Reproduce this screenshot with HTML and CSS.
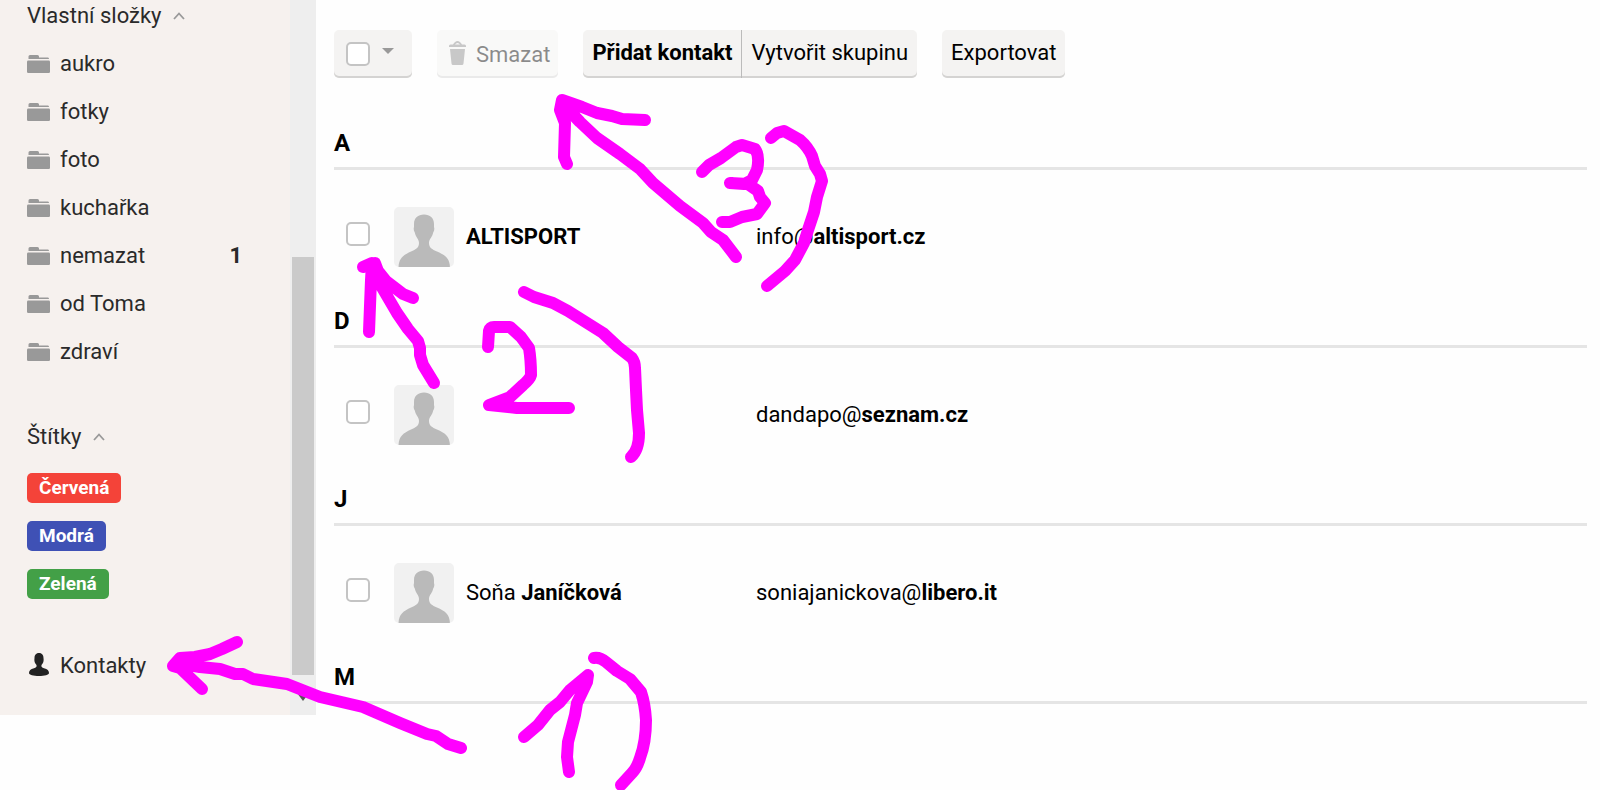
FILE: index.html
```
<!DOCTYPE html>
<html lang="cs">
<head>
  <meta charset="UTF-8" />
  <meta name="viewport" content="width=device-width, initial-scale=1.0" />
  <title>Kontakty</title>
  <link rel="stylesheet" href="styles.css">
</head>
<body>

  <svg class="symbols" aria-hidden="true">
    <symbol id="folder" viewBox="0 0 23 18">
      <path d="M1.500 3V1.500Q1.500 0 3 0h7.500Q12 0 12 1.500V2.500h9q1 0 1 1.500H1.500z" />
      <rect y="5.500" width="23" height="12.500" rx="1.200" />
    </symbol>
    <symbol id="chevron" viewBox="0 0 12 8">
      <path d="M1 7l5-5.500L11 7" fill="none" stroke="currentColor" stroke-width="1.800" />
    </symbol>
    <symbol id="avatar" viewBox="0 0 60 60">
      <path d="M20 17c0-6 4-9.500 10-9.500S40 11 40 17v3c.6 2 .3 4-.8 5.500C38.500 30 35 32 35 36c0 4.500 3 6.500 8 8.500C51 48 55.500 51 56 60H4.500c.5-9 5-12 12.500-15.500 5-2 8-4 8-8.500 0-4-3.500-6-4.200-10.500-1.100-1.500-1.400-3.500-.8-5.500z" />
    </symbol>
  </svg>

  <div class="layout">
    <aside class="sidebar">
      <nav class="menu">
        <button class="menu-title">Vlastní složky <svg class="chevron"><use href="#chevron" /></svg></button>
        <ul class="folders">
          <li><a href="#aukro"><svg class="folder"><use href="#folder" /></svg>aukro</a></li>
          <li><a href="#fotky"><svg class="folder"><use href="#folder" /></svg>fotky</a></li>
          <li><a href="#foto"><svg class="folder"><use href="#folder" /></svg>foto</a></li>
          <li><a href="#kucharka"><svg class="folder"><use href="#folder" /></svg>kuchařka</a></li>
          <li><a href="#nemazat"><svg class="folder"><use href="#folder" /></svg>nemazat<b class="count">1</b></a></li>
          <li><a href="#od-toma"><svg class="folder"><use href="#folder" /></svg>od Toma</a></li>
          <li><a href="#zdravi"><svg class="folder"><use href="#folder" /></svg>zdraví</a></li>
        </ul>

        <button class="menu-title">Štítky <svg class="chevron"><use href="#chevron" /></svg></button>
        <ul class="labels">
          <li><a class="label red" href="#cervena">Červená</a></li>
          <li><a class="label blue" href="#modra">Modrá</a></li>
          <li><a class="label green" href="#zelena">Zelená</a></li>
        </ul>

        <a class="contacts-link" href="#kontakty">
          <svg class="person" viewBox="0 0 20 23">
            <path d="M5.500 5C5.500 1.500 7.500 0 10 0s4.500 1.500 4.500 5c.5 3-.2 5-2 7-.5 2 .5 2.500 2.500 3.200 3.500 1 5 2.300 5 4.800 0 2-4.500 3-10 3S0 22 0 20c0-2.500 1.500-3.800 5-4.800 2-.7 3-1.200 2.500-3.200-1.800-2-2.500-4-2-7z" />
          </svg>Kontakty
        </a>
      </nav>
      <div class="scrollbar">
        <div class="thumb"></div>
        <svg class="scroll-down" viewBox="0 0 12 8"><path d="M0 0h12L6 8z" /></svg>
      </div>
    </aside>

    <main class="content">
      <div class="toolbar">
        <div class="btn select-all">
          <input type="checkbox" aria-label="Vybrat vše">
          <button class="arrow" aria-label="Možnosti výběru">
            <svg viewBox="0 0 12 6"><path d="M0 0h12L6 6z" /></svg>
          </button>
        </div>
        <button class="btn delete" disabled>
          <svg class="trash" viewBox="0 0 17 24">
            <path d="M0 5q0-1.500 1.500-1.500H4Q6 0 8.500 0T13 3.500h2.500Q17 3.500 17 5v1H0zM6 3.500h5Q10 2 8.500 2T6 3.500zM1 8h15l-1.500 14.500q-.2 1.500-1.500 1.500H4q-1.300 0-1.500-1.500z" />
          </svg>Smazat
        </button>
        <div class="btn-group">
          <button class="btn add">Přidat kontakt</button>
          <button class="btn">Vytvořit skupinu</button>
        </div>
        <button class="btn">Exportovat</button>
      </div>

      <section>
        <h2>A</h2>
        <div class="contact">
          <input type="checkbox" aria-label="Vybrat ALTISPORT">
          <svg class="avatar"><use href="#avatar" /></svg>
          <span class="name"><b>ALTISPORT</b></span>
          <span class="email">info@<b>altisport.cz</b></span>
        </div>
      </section>

      <section>
        <h2>D</h2>
        <div class="contact">
          <input type="checkbox" aria-label="Vybrat dandapo@seznam.cz">
          <svg class="avatar"><use href="#avatar" /></svg>
          <span class="name"></span>
          <span class="email">dandapo@<b>seznam.cz</b></span>
        </div>
      </section>

      <section>
        <h2>J</h2>
        <div class="contact">
          <input type="checkbox" aria-label="Vybrat Soňa Janíčková">
          <svg class="avatar"><use href="#avatar" /></svg>
          <span class="name">Soňa <b>Janíčková</b></span>
          <span class="email">soniajanickova@<b>libero.it</b></span>
        </div>
      </section>

      <section>
        <h2>M</h2>
      </section>
    </main>
  </div>

  <!-- hand-drawn steps over the page -->
  <svg class="drawing" width="1600" height="790" viewBox="0 0 1600 790" aria-hidden="true">
    <!-- step 1: Kontakty -->
    <path d="M237 642L222 649 210 654 195 657 180 658 173 666 180 668 202 689M178 663L200 667 220 669 235 674 243 674 253 679 287 684 320 697 363 707 400 723 427 734 436 736 448 744 461 748" />
    <path d="M179 661l8 8" />
    <path d="M524 737L538 725 550 710 560 702 570 690 588 675 587 682 577 703 575 715 568 742 567 757 569 772" />
    <path d="M594 658Q600 657 606 662L617 671 630 679 641 692Q645 704 646 720 646 742 640 758 637 768 632 773L621 785" />
    <!-- step 2: checkbox -->
    <path d="M363 267L372 263 371 280 369 332M375 263L378 271 386 281 403 294 413 298M373 270L380 284 397 313 408 329 418 341 420 348 420 355 423 365 434 383" />
    <path d="M488 347L489 331Q490 327 494 327L510 327 521 337 529 348Q531 360 531 375 530 379 523 385L510 397 489 405 517 408 569 408" />
    <path d="M524 292L534 297 553 303 568 311 603 333 618 347 632 358Q635 362 635 368L636 390 637 410 639 433Q639 450 631 457" />
    <!-- step 3: Smazat -->
    <path d="M645 120L622 119 612 116 597 113 582 107 562 100 560 110 565 123 564 157 567 164M562 103L580 122 597 138 620 154 640 169 653 183 680 206 703 223 711 232 723 240 736 257" />
    <path d="M702 172L709 165 721 158 736 147 742 145 755 149Q760 156 757 170L752 180 744 184 730 183 748 184 758 191 760 197 765 203 757 214 742 217 730 222 722 222" />
    <path d="M771 138L777 133 784 131 800 140Q808 147 812 156L815 166 820 174 822 181 817 197 814 212 808 230 804 243 795 260 785 271 767 286" />
  </svg>

</body>
</html>
```
FILE: styles.css
```
* {
  margin: 0;
  padding: 0;
  box-sizing: border-box;
}
body {
  font-family: Roboto, "Liberation Sans", sans-serif;
  font-size: 22px;
  line-height: 30px;
  background: #fefefe;
  color: #000;
  position: relative;
  min-height: 100vh;
}
button {
  font: inherit;
  color: inherit;
  border: none;
  background: none;
  cursor: pointer;
}
a {
  color: inherit;
  text-decoration: none;
}
ul {
  list-style: none;
}
.symbols {
  display: none;
}
.layout {
  display: flex;
  align-items: flex-start;
}

/* sidebar */
.sidebar {
  display: flex;
  flex: 0 0 316px;
  background: #f6f1ee;
  color: #2a2a2a;
}
.menu {
  flex: 1;
  padding: 1px 48px 25px 27px;
}
.menu-title {
  display: flex;
  align-items: center;
  gap: 12px;
}
.chevron {
  width: 12px;
  height: 8px;
  color: #999;
}
.folders {
  padding: 9px 0 46px;
}
.folders a,
.contacts-link {
  display: flex;
  align-items: center;
  height: 48px;
}
.folder {
  width: 23px;
  height: 18px;
  margin-right: 10px;
  fill: #999;
}
.count {
  margin-left: auto;
}
.labels {
  padding: 12px 0 34px;
}
.labels li {
  display: flex;
  align-items: center;
  height: 48px;
}
.label {
  padding: 0 12px;
  border-radius: 5px;
  color: #fff;
  font-size: 19px;
  font-weight: bold;
}
.red {
  background: #f44339;
}
.blue {
  background: #3f51b5;
}
.green {
  background: #43a047;
}
.person {
  width: 20px;
  height: 23px;
  margin: 0 11px 4px 2px;
  fill: #222;
}
.scrollbar {
  display: flex;
  flex-direction: column;
  align-items: center;
  width: 26px;
  padding: 257px 2px 14px;
  background: #eee;
}
.thumb {
  flex: 1;
  width: 100%;
  background: #cacaca;
}
.scroll-down {
  width: 12px;
  height: 8px;
  margin-top: 18px;
  fill: #555;
}

/* contacts */
.content {
  flex: 1;
  padding: 30px 13px 0 18px;
}
.toolbar {
  display: flex;
  gap: 25px;
  margin-bottom: 50px;
}
.btn {
  height: 48px;
  padding: 0 9px 2px;
  border-radius: 5px;
  background: #f4f3f2;
  box-shadow: inset 0 -2px #d4d3d2;
  white-space: nowrap;
}
.btn-group {
  display: flex;
}
.btn-group .btn:first-child {
  border-radius: 5px 0 0 5px;
  border-right: 1px solid #bbb;
}
.btn-group .btn:last-child {
  border-radius: 0 5px 5px 0;
}
.add {
  font-weight: bold;
}
.select-all {
  display: flex;
  align-items: center;
  gap: 12px;
  padding: 0 18px 0 12px;
}
.arrow {
  display: flex;
  padding-bottom: 6px;
}
.arrow svg {
  width: 12px;
  height: 6px;
  fill: #999;
}
.delete {
  display: flex;
  align-items: center;
  gap: 10px;
  padding: 2px 8px 0 12px;
  opacity: 0.45;
  cursor: default;
}
.trash {
  width: 17px;
  height: 24px;
  margin-bottom: 4px;
  fill: #888;
}
input[type="checkbox"] {
  appearance: none;
  width: 24px;
  height: 24px;
  border: 2px solid #c4c4c4;
  border-radius: 5px;
  background: #fff;
}
input[type="checkbox"]:checked {
  background: #999;
}
h2 {
  padding-bottom: 9px;
  border-bottom: 3px solid #e5e5e5;
  font-size: 24px;
  line-height: 30px;
}
.contact {
  display: grid;
  grid-template-columns: 24px 72px 278px 1fr;
  column-gap: 12px;
  align-items: center;
  height: 136px;
  padding: 0 0 3px 12px;
}
.contact input {
  margin-bottom: 6px;
}
.avatar {
  width: 60px;
  height: 60px;
  margin-left: 12px;
  border-radius: 5px;
  background: #f1f1f1;
  fill: #bababa;
}

.drawing {
  position: absolute;
  top: 0;
  left: 0;
  fill: none;
  stroke: #ff00ff;
  stroke-width: 12;
  stroke-linecap: round;
  stroke-linejoin: round;
  pointer-events: none;
}
```
